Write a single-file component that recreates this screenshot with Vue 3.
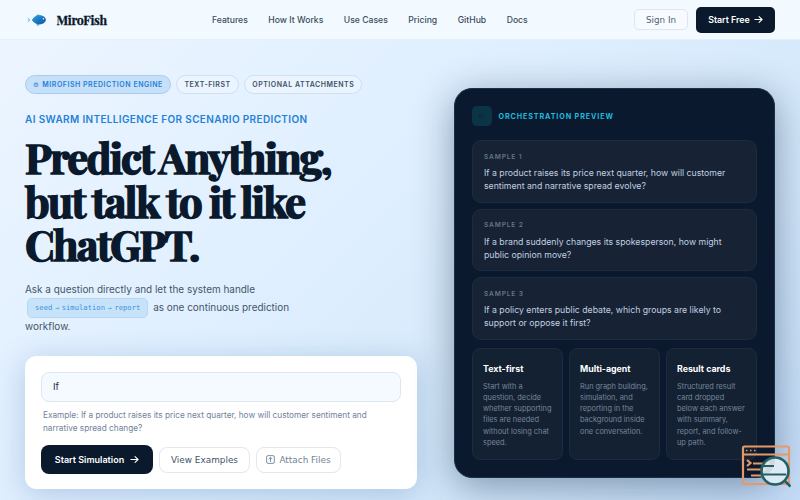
<script setup>
import { ref } from 'vue'

const navLinks = ['Features', 'How It Works', 'Use Cases', 'Pricing', 'GitHub', 'Docs']

const question = ref('If')

const titleLines = ['Predict Anything,', 'but talk to it like', 'ChatGPT.']

const samples = [
  'If a product raises its price next quarter, how will customer sentiment and narrative spread evolve?',
  'If a brand suddenly changes its spokesperson, how might public opinion move?',
  'If a policy enters public debate, which groups are likely to support or oppose it first?'
]

const features = [
  { title: 'Text-first', text: 'Start with a question, decide whether supporting files are needed without losing chat speed.' },
  { title: 'Multi-agent', text: 'Run graph building, simulation, and reporting in the background inside one conversation.' },
  { title: 'Result cards', text: 'Structured result card dropped below each answer with summary, report, and follow-up path.' }
]
</script>

<template>
  <div class="page">
    <header class="header">
      <div class="brand">
        <svg class="fish" viewBox="0 0 20 14">
          <defs>
            <linearGradient id="fishBody" x1="0" y1="0" x2="1" y2="1">
              <stop offset="0" stop-color="#38a9e4" />
              <stop offset="0.5" stop-color="#1a78c2" />
              <stop offset="1" stop-color="#1259a0" />
            </linearGradient>
          </defs>
          <path d="M.3 4.2 3.4 7 .5 9.8 1.5 7z" fill="#63c8ee" />
          <path d="M8 3.5 11 1.2 14.5 3zM9 10.5l2 3 1-2.6z" fill="#55b7e8" />
          <path d="M4.8 7C7 3.6 9.5 2.3 12.6 2.3c3.5 0 6.2 2.2 6.2 4.5 0 2.6-2.9 4.6-6.2 4.6C9.5 11.4 7 10 4.8 7z" fill="url(#fishBody)" />
          <circle cx="16.4" cy="5.7" r=".8" fill="#d9f2ff" />
        </svg>
        <span class="brand-name">MiroFish</span>
      </div>
      <nav class="nav">
        <a v-for="link in navLinks" :key="link">{{ link }}</a>
      </nav>
      <div class="header-actions">
        <button class="btn sign-in">Sign In</button>
        <button class="btn start-free">
          Start Free
          <svg class="arrow" viewBox="0 0 10 10"><path d="M1 5h8M5.6 1.8 9 5 5.6 8.2" /></svg>
        </button>
      </div>
    </header>

    <main class="hero">
      <section class="intro">
        <div class="tags">
          <span class="tag active"><i class="gear">⚙</i>MIROFISH PREDICTION ENGINE</span>
          <span class="tag">TEXT-FIRST</span>
          <span class="tag">OPTIONAL ATTACHMENTS</span>
        </div>
        <p class="eyebrow">AI SWARM INTELLIGENCE FOR SCENARIO PREDICTION</p>
        <h1 class="title">
          <span v-for="(line, i) in titleLines" :key="line" :class="'line' + (i + 1)">{{ line }}</span>
        </h1>
        <p class="lead">
          Ask a question directly and let the system handle
          <code><span>seed</span><b>→</b><span>simulation</span><b>→</b><span>report</span></code> as one continuous prediction workflow.
        </p>

        <div class="composer">
          <input v-model="question" class="question" type="text">
          <p class="example">Example: If a product raises its price next quarter, how will customer sentiment and narrative spread change?</p>
          <div class="actions">
            <button class="btn start">
              Start Simulation
              <svg class="arrow" viewBox="0 0 10 10"><path d="M1 5h8M5.6 1.8 9 5 5.6 8.2" /></svg>
            </button>
            <button class="btn view">View Examples</button>
            <button class="btn attach">
              <svg class="upload" viewBox="0 0 10 10"><rect x=".7" y=".7" width="8.6" height="8.6" rx="1.6" /><path d="M5 7.7V2.8M3 4.6l2-2 2 2" /></svg>
              Attach Files
            </button>
          </div>
        </div>
      </section>

      <section class="preview">
        <div class="preview-head">
          <span class="preview-icon">⚙</span>
          <span>ORCHESTRATION PREVIEW</span>
        </div>
        <div class="samples">
          <div v-for="(sample, i) in samples" :key="i" class="sample">
            <span class="sample-label">SAMPLE {{ i + 1 }}</span>
            <p>{{ sample }}</p>
          </div>
        </div>
        <div class="features">
          <div v-for="feature in features" :key="feature.title" class="feature">
            <h3>{{ feature.title }}</h3>
            <p>{{ feature.text }}</p>
          </div>
        </div>
      </section>
    </main>

    <svg class="inspector" viewBox="0 0 50 44">
      <g fill="none" stroke="#e59a66" stroke-width="2.2">
        <rect x="2" y="2.5" width="46" height="37.5" rx="1.5" />
        <path d="M2 10.5h46" />
        <path d="m6 16 3.5 3-3.5 3M12 19.5h17M6 25.5h19M10 31.5h13" />
      </g>
      <path d="M5 6.5h1.5M9 6.5h1.5M13 6.5h1.5" stroke="#e59a66" stroke-width="1.5" />
      <circle cx="34" cy="27" r="13.5" fill="#e2eef5" fill-opacity=".9" stroke="#246067" stroke-width="2.6" />
      <path d="M22 22h11M22 30.5h23" stroke="#246067" stroke-width="2" />
      <path d="m43.5 36.5 6 6" stroke="#246067" stroke-width="2.6" />
    </svg>
  </div>
</template>

<style>
body {
  margin: 0;
  overflow: hidden;
}
</style>

<style scoped>
* {
  box-sizing: border-box;
}

p, h1, h3 {
  margin: 0;
}

.page {
  position: relative;
  height: 500px;
  overflow: hidden;
  font-family: Inter, "Liberation Sans", sans-serif;
  color: #0a192c;
  background: linear-gradient(135deg, #edf5ff 0%, #dfefff 42%, #d7eafb 65%, #c4dcf8 100%);
}

.header {
  display: grid;
  grid-template-columns: 187px 1fr auto;
  align-items: center;
  height: 40px;
  padding: 0 25px;
  background: #f3faff;
  border-bottom: 1px solid #e4f0f9;
}

.brand {
  display: flex;
  align-items: center;
  gap: 9.5px;
}

.fish {
  width: 20px;
  height: 14px;
  margin-left: 2px;
}

.brand-name {
  font: bold 12.5px/16px "Playfair Display", "Liberation Serif", serif;
  letter-spacing: -0.3px;
  -webkit-text-stroke: 0.3px #0a192c;
}

.nav {
  display: flex;
  gap: 20.5px;
  font-size: 8.64px;
  font-weight: 500;
  color: #3b4d60;
}

.header-actions {
  display: flex;
  align-items: center;
  gap: 8px;
}

.btn {
  display: inline-flex;
  align-items: center;
  justify-content: center;
  padding: 0;
  border: 1px solid #e0e8f0;
  background: #fff;
  font-family: Inter, sans-serif;
  white-space: nowrap;
}

.sign-in {
  width: 54px;
  height: 21px;
  border-radius: 5px;
  border-color: #dce7f2;
  background: #f7fbff;
  font: 8.8px "DejaVu Sans", sans-serif;
  color: #526273;
}

.start-free {
  width: 79px;
  height: 26px;
  gap: 4px;
  border: 0;
  border-radius: 5px;
  background: #0a192c;
  color: #fff;
  font-size: 8.8px;
  font-weight: 600;
}

.arrow {
  width: 9px;
  height: 9px;
  fill: none;
  stroke: #fff;
  stroke-width: 1.2;
  stroke-linecap: round;
  stroke-linejoin: round;
}

.hero {
  display: grid;
  grid-template-columns: 392px 321px;
  justify-content: space-between;
  align-items: start;
  padding: 0 25px;
}

.intro {
  padding-top: 35px;
}

.tags {
  display: flex;
  gap: 5.6px;
}

.tag {
  display: flex;
  align-items: center;
  height: 19px;
  padding: 0 7px;
  border: 1px solid #cfe0ee;
  border-radius: 10px;
  background: rgba(255, 255, 255, 0.25);
  font-size: 7px;
  font-weight: 600;
  letter-spacing: 0.53px;
  color: #405266;
  white-space: nowrap;
}

.tag.active {
  border-color: #a9cdef;
  background: #c6e0f9;
  color: #2481d7;
}

.gear {
  margin-right: 3px;
  font: 6.5px "DejaVu Sans", sans-serif;
}

.eyebrow {
  margin-top: 18px;
  font-size: 10px;
  line-height: 14px;
  font-weight: 600;
  letter-spacing: 0.36px;
  color: #2481d7;
  white-space: nowrap;
}

.title {
  margin-top: 10px;
  font: bold 42px/43.5px "Playfair Display", "Liberation Serif", serif;
  -webkit-text-stroke: 1.5px #0a192c;
  white-space: nowrap;
}

.title span {
  display: block;
}

.line1 {
  letter-spacing: -1.9px;
}

.line2 {
  letter-spacing: -1.8px;
}

.line3 {
  letter-spacing: -1.65px;
}

.lead {
  width: 285px;
  margin-top: 13px;
  font-size: 9.95px;
  line-height: 18px;
  color: #43566a;
}

code {
  display: inline-flex;
  align-items: center;
  height: 20px;
  margin: -1px 2px -1px 2px;
  padding: 0 7px;
  border: 1px solid #b4d8f4;
  border-radius: 5px;
  background: #c7e3fa;
  font: 7.2px/18px "DejaVu Sans Mono", monospace;
  color: #3e91dc;
  vertical-align: middle;
}

code b {
  width: 9.4px;
  font: 5px/18px "DejaVu Sans", sans-serif;
  text-align: center;
}

.composer {
  height: 133px;
  margin-top: 21.5px;
  padding: 14.5px 15px;
  border: 1px solid #fff;
  border-radius: 11px;
  background: #fff;
  box-shadow: 0 5px 30px rgba(40, 90, 150, 0.26);
}

.question {
  display: block;
  width: 100%;
  height: 30px;
  padding: 0 11px;
  border: 1px solid #dde7ef;
  border-radius: 8px;
  outline: none;
  background: #f4faff;
  font: 9.5px Inter, sans-serif;
  color: #1c2d40;
}

.example {
  margin: 7.5px 2px 0;
  font-size: 8.25px;
  line-height: 13px;
  color: #71839a;
}

.actions {
  display: flex;
  align-items: center;
  gap: 6px;
  margin-top: 10px;
}

.start {
  width: 112px;
  height: 29px;
  gap: 6px;
  border: 0;
  border-radius: 8px;
  background: #0a192c;
  color: #fff;
  font-size: 9px;
  font-weight: 600;
}

.view {
  width: 91px;
  height: 26px;
  border-radius: 8px;
  font: 8.9px "DejaVu Sans", sans-serif;
  color: #43566a;
}

.attach {
  width: 85px;
  height: 26px;
  gap: 4px;
  border-radius: 8px;
  font: 8.9px "DejaVu Sans", sans-serif;
  color: #71839a;
}

.upload {
  width: 9px;
  height: 9px;
  fill: none;
  stroke: #61758a;
  stroke-width: 0.9;
}

.preview {
  height: 390px;
  margin-top: 47.5px;
  padding: 17.5px 17px 0;
  border: 1px solid #183149;
  border-radius: 18px;
  background: #0a192d;
  box-shadow: 0 8px 38px rgba(10, 35, 65, 0.42);
}

.preview-head {
  display: flex;
  align-items: center;
  gap: 6.5px;
  font-size: 7.2px;
  font-weight: 700;
  letter-spacing: 0.88px;
  color: #20b9df;
}

.preview-icon {
  display: flex;
  align-items: center;
  justify-content: center;
  width: 20px;
  height: 20px;
  border-radius: 5px;
  background: #0b3446;
  color: #0c293a;
  font: 8px "DejaVu Sans", sans-serif;
}

.samples {
  display: grid;
  gap: 6px;
  margin-top: 14px;
}

.sample {
  height: 62.5px;
  padding: 11.5px 11px 0;
  border: 1px solid #1c2c3e;
  border-radius: 9px;
  background: #172334;
}

.sample-label {
  display: block;
  font-size: 6.6px;
  line-height: 9px;
  font-weight: 600;
  letter-spacing: 0.85px;
  color: #65758a;
}

.sample p {
  margin-top: 5.5px;
  font-size: 8.73px;
  line-height: 13px;
  color: #c0d0e1;
}

.features {
  display: grid;
  grid-template-columns: repeat(3, 1fr);
  gap: 6px;
  margin-top: 8.5px;
}

.feature {
  height: 111.5px;
  padding: 12.5px 10px 0;
  border: 1px solid #1c2c3e;
  border-radius: 8px;
  background: #142133;
}

.feature h3 {
  font-size: 8.8px;
  line-height: 13px;
  font-weight: 700;
  color: #fff;
}

.feature p {
  margin-top: 6px;
  font-size: 7.4px;
  line-height: 11.3px;
  color: #75869a;
}

.inspector {
  position: absolute;
  left: 741px;
  top: 444px;
  width: 50px;
  height: 44px;
}
</style>
